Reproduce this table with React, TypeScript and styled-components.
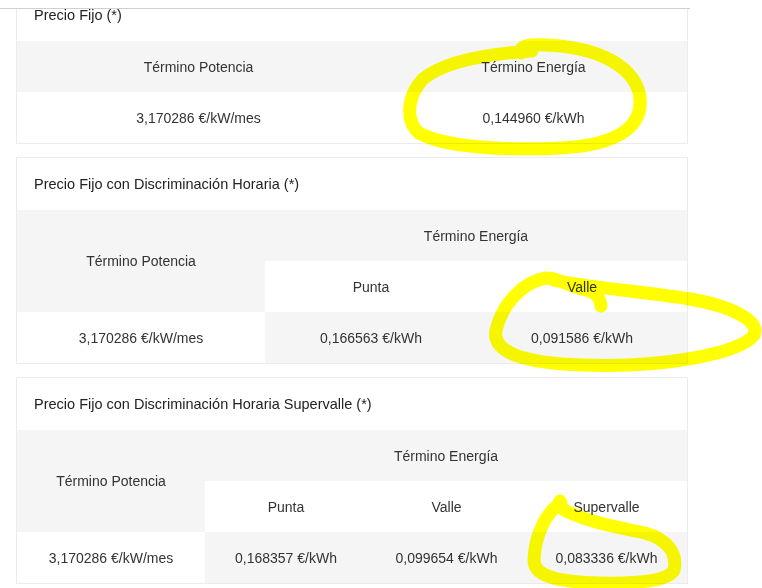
import React from 'react';
import styled, { createGlobalStyle } from 'styled-components';

const GlobalStyle = createGlobalStyle`
  html, body {
    margin: 0;
    padding: 0;
    background: #fff;
  }
  body {
    font-family: "Liberation Sans", Arial, sans-serif;
  }
`;

type Cell = { text: string; shade?: boolean; rowSpan?: number; colSpan?: number };
type Tariff = { title: string; cols: number[]; rows: Cell[][] };

const tariffs: Tariff[] = [
  {
    title: 'Precio Fijo (*)',
    cols: [363, 307],
    rows: [
      [
        { text: 'Término Potencia', shade: true },
        { text: 'Término Energía', shade: true },
      ],
      [{ text: '3,170286 €/kW/mes' }, { text: '0,144960 €/kWh' }],
    ],
  },
  {
    title: 'Precio Fijo con Discriminación Horaria (*)',
    cols: [248, 212, 210],
    rows: [
      [
        { text: 'Término Potencia', shade: true, rowSpan: 2 },
        { text: 'Término Energía', shade: true, colSpan: 2 },
      ],
      [{ text: 'Punta' }, { text: 'Valle' }],
      [
        { text: '3,170286 €/kW/mes' },
        { text: '0,166563 €/kWh', shade: true },
        { text: '0,091586 €/kWh', shade: true },
      ],
    ],
  },
  {
    title: 'Precio Fijo con Discriminación Horaria Supervalle (*)',
    cols: [188, 162, 159, 161],
    rows: [
      [
        { text: 'Término Potencia', shade: true, rowSpan: 2 },
        { text: 'Término Energía', shade: true, colSpan: 3 },
      ],
      [{ text: 'Punta' }, { text: 'Valle' }, { text: 'Supervalle' }],
      [
        { text: '3,170286 €/kW/mes' },
        { text: '0,168357 €/kWh', shade: true },
        { text: '0,099654 €/kWh', shade: true },
        { text: '0,083336 €/kWh', shade: true },
      ],
    ],
  },
];

// hand-drawn highlighter marks laid over the tables
const marks = [
  'M 521 53 C 518 46, 530 44, 546 45 C 592 47, 630 62, 639 92 C 646 124, 622 145, 560 148 C 498 151, 442 146, 419 133 C 405 121, 407 96, 423 79 C 444 62, 484 54, 532 51',
  'M 601 306 C 600 298, 597 293, 586 290 C 568 286, 556 277, 546 278 C 522 282, 502 305, 496 330 C 492 352, 522 363, 582 365 C 662 368, 740 354, 754 335 C 760 320, 730 306, 690 299 C 640 291, 592 288, 553 280',
  'M 561 503 C 546 512, 535 535, 534 560 C 534 576, 556 582, 600 583 C 642 584, 670 580, 674 570 C 678 552, 666 539, 645 533 C 615 527, 586 521, 566 511 C 559 507, 557 504, 560 501',
];

const App = () => {
  return (
    <>
      <GlobalStyle />
      <Page>
        <TopBar />
        <Scroll>
          {tariffs.map((t) => (
            <Card key={t.title}>
              <Title>{t.title}</Title>
              <Table>
                <colgroup>
                  {t.cols.map((w, i) => (
                    <col key={i} style={{ width: w }} />
                  ))}
                </colgroup>
                <tbody>
                  {t.rows.map((row, ri) => (
                    <tr key={ri}>
                      {row.map((c, ci) => (
                        <Td key={ci} $shade={c.shade} rowSpan={c.rowSpan} colSpan={c.colSpan}>
                          {c.text}
                        </Td>
                      ))}
                    </tr>
                  ))}
                </tbody>
              </Table>
            </Card>
          ))}
        </Scroll>
        <Marks width="762" height="588" viewBox="0 0 762 588">
          {marks.map((d, i) => (
            <path key={i} d={d} />
          ))}
        </Marks>
      </Page>
    </>
  );
};

export default App;

const Page = styled.div`
  position: relative;
  width: 762px;
  height: 588px;
  overflow: hidden;
  background: #fff;
`;

const TopBar = styled.div`
  width: 690px;
  height: 8px;
  background: #fff;
  border-bottom: 1px solid #d0d0d0;
`;

const Scroll = styled.div`
  height: 579px;
  overflow: hidden;
  display: flex;
  flex-direction: column;
  gap: 13px;
  padding-left: 16px;

  & > :first-child {
    margin-top: -21px;
  }
`;

const Card = styled.section`
  width: 670px;
  flex-shrink: 0;
  border: 1px solid #ececec;
  background: #fff;
`;

const Title = styled.div`
  height: 52px;
  display: flex;
  align-items: center;
  padding-left: 17px;
  font-size: 14.5px;
  color: #222;
`;

const Table = styled.table`
  width: 670px;
  border-collapse: collapse;
  table-layout: fixed;
`;

const Td = styled.td<{ $shade?: boolean }>`
  height: 51px;
  padding: 0;
  text-align: center;
  vertical-align: middle;
  font-size: 14px;
  color: #333;
  background: ${(p) => (p.$shade ? '#f5f5f5' : '#fff')};
`;

const Marks = styled.svg`
  position: absolute;
  left: 0;
  top: 0;
  pointer-events: none;
  mix-blend-mode: multiply;

  path {
    fill: none;
    stroke: #ffff00;
    stroke-width: 13;
    stroke-linecap: round;
    stroke-linejoin: round;
  }
`;
